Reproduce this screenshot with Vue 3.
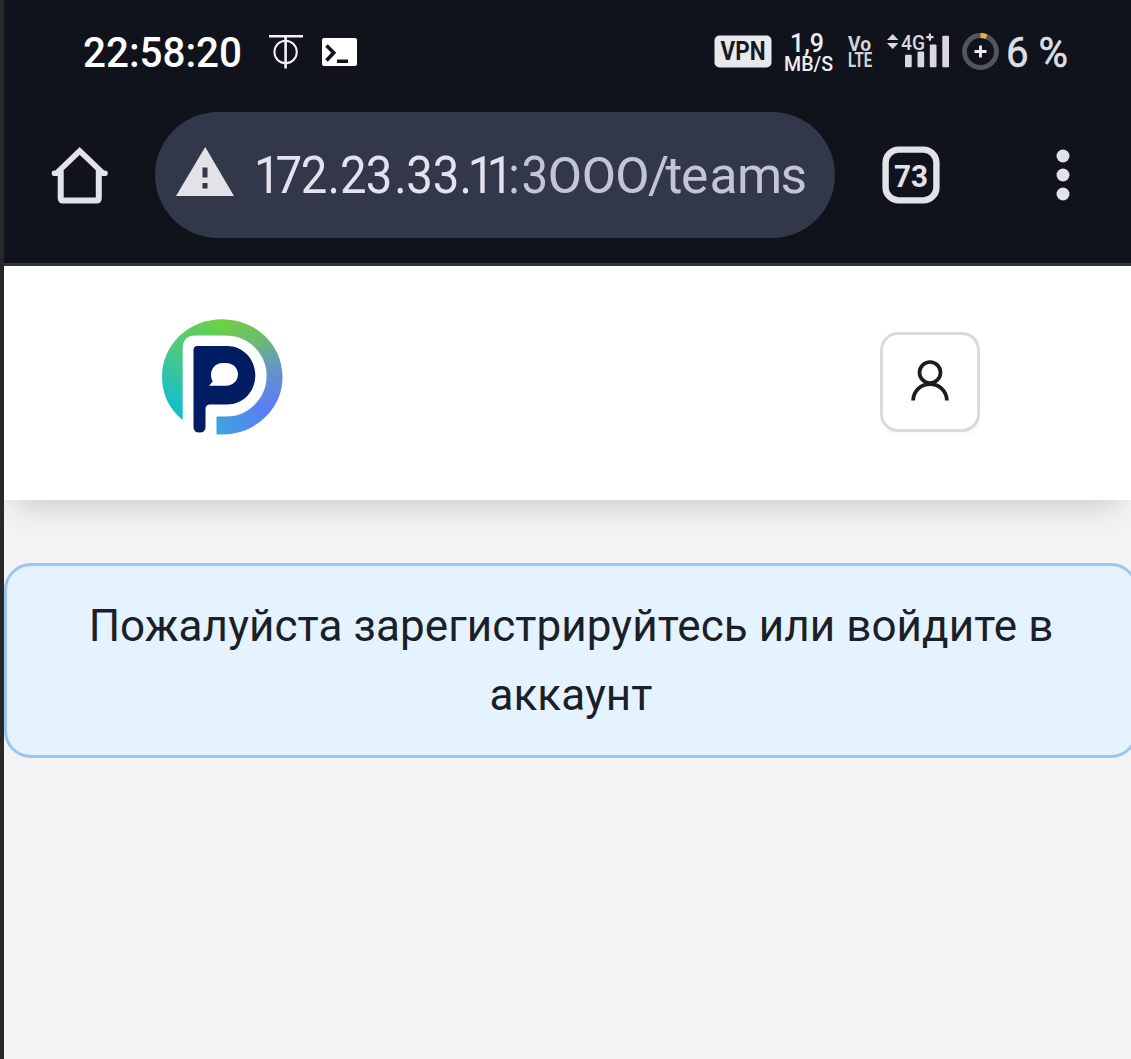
<script setup>
const signalBars = [
  { x: 18, y: 20.8, h: 12.4 },
  { x: 30.5, y: 17.5, h: 15.7 },
  { x: 42.8, y: 10.5, h: 22.7 },
  { x: 55.3, y: 1.8, h: 31.4 },
]
</script>

<template>
  <div class="screen">
    <header class="browser">
      <div class="status">
        <svg class="clock" width="162" height="44" viewBox="0 0 162 44">
          <text x="0" y="36.5" textLength="159" lengthAdjust="spacingAndGlyphs">22:58:20</text>
        </svg>
        <svg class="phi" width="36" height="36" viewBox="0 0 36 36" fill="none" stroke="#f3f3f6">
          <path d="M1 2.2H35" stroke-width="2.6" />
          <path d="M17.6 2V34.5" stroke-width="2.6" />
          <circle cx="17.6" cy="18" r="11.2" stroke-width="2" />
        </svg>
        <svg class="terminal" width="35" height="28" viewBox="0 0 35 28">
          <rect width="35" height="28" rx="2" fill="#fff" />
          <path d="M4.500 7.500L11.700 14.800L4.500 22.500M15 23.200H26" fill="none" stroke="#10131b" stroke-width="3.6" />
        </svg>
        <div class="grow"></div>
        <svg class="vpn" width="58" height="33" viewBox="0 0 58 33">
          <rect x=".5" y=".5" width="57" height="32" rx="5" fill="#e9e9eb" />
          <text x="6.5" y="25" textLength="45" lengthAdjust="spacingAndGlyphs">VPN</text>
        </svg>
        <svg class="speed" width="50" height="44" viewBox="0 0 50 44">
          <text class="speed-value" x="6" y="22.3" textLength="34" lengthAdjust="spacingAndGlyphs">1,9</text>
          <text class="speed-unit" x="0" y="40.5" textLength="49" lengthAdjust="spacingAndGlyphs">MB/S</text>
        </svg>
        <svg class="volte" width="26" height="36" viewBox="0 0 26 36">
          <text x="0" y="16.5" textLength="23" lengthAdjust="spacingAndGlyphs">Vo</text>
          <text x="0" y="32.8" textLength="24" lengthAdjust="spacingAndGlyphs">LTE</text>
        </svg>
        <svg class="signal" width="64" height="36" viewBox="0 0 64 36">
          <path d="M0 6L5.700 0L11.400 6ZM0 9L5.700 15L11.400 9Z" fill="#d8d9de" />
          <rect v-for="bar in signalBars" :key="bar.x" :x="bar.x" :y="bar.y" width="6.700" :height="bar.h" rx="1" fill="#d8d9de" />
          <text class="net" x="14" y="15.500" textLength="24" lengthAdjust="spacingAndGlyphs">4G</text>
          <path d="M39.300 3.200H46.500M42.900 -.4V6.800" stroke="#d8d9de" stroke-width="2.200" />
        </svg>
        <svg class="battery" width="37" height="37" viewBox="0 0 37 37" fill="none">
          <circle cx="18.500" cy="18.500" r="16" stroke="#53555c" stroke-width="4.800" />
          <path d="M18.500 2.500A16 16 0 0 1 24.500 3.700" stroke="#e8b23a" stroke-width="5" />
          <path d="M12.500 18.500H24.500M18.500 12.500V24.500" stroke="#ededf0" stroke-width="2.800" />
        </svg>
        <svg class="percent" width="64" height="44" viewBox="0 0 64 44">
          <text x="0" y="36.500" textLength="62" lengthAdjust="spacingAndGlyphs">6 %</text>
        </svg>
      </div>

      <div class="toolbar">
        <svg class="home" width="58" height="60" viewBox="0 0 58 60" fill="none" stroke="#e3e2e9" stroke-width="6">
          <path d="M9.700 25.500V53Q9.700 55.500 12.200 55.500H45.300Q47.800 55.500 47.800 53V25.500" />
          <path d="M3.500 28.300H5.500L28.700 6L52 28.300H54" stroke-width="5.600" stroke-linecap="round" stroke-linejoin="miter" />
        </svg>
        <div class="omnibox">
          <svg width="680" height="126" viewBox="0 0 680 126">
            <path d="M21 84L50.200 35L79 84Z" fill="#e3e2e9" />
            <path d="M50 55.500V65.500M50 71V76.500" stroke="#33374a" stroke-width="5" />
            <g transform="scale(.92 1)">
              <text class="url" y="81"><tspan class="host" x="107.500 131 158.500 187.500 201 229 260 273 302 331 340 360.500">172.23.33.11</tspan><tspan x="384 398.500">:3</tspan></text>
            </g>
            <g transform="scale(1.120 1)">
              <text class="url zeros" y="81" x="350.300 380.500 410.500">000</text>
            </g>
            <text class="url" y="81" x="493 510.500 526 554.500 582 625.500">/teams</text>
          </svg>
        </div>
        <svg class="tabs" width="58" height="58" viewBox="0 0 58 58">
          <rect x="3.600" y="3.600" width="50.800" height="50.800" rx="13" fill="none" stroke="#e3e2e9" stroke-width="6.400" />
          <text x="12" y="40.500" textLength="34" lengthAdjust="spacingAndGlyphs">73</text>
        </svg>
        <svg class="menu" width="14" height="52" viewBox="0 0 14 52" fill="#e3e2e9">
          <circle cx="7" cy="7" r="6.500" />
          <circle cx="7" cy="26" r="6.500" />
          <circle cx="7" cy="45" r="6.500" />
        </svg>
      </div>
    </header>

    <nav class="site-header">
      <svg class="logo" width="122" height="118" viewBox="0 0 122 118">
        <defs>
          <linearGradient id="ringLeft" gradientUnits="userSpaceOnUse" x1="66" y1="0" x2="14" y2="88">
            <stop offset="0" stop-color="#70d23c" />
            <stop offset=".5" stop-color="#4dc984" />
            <stop offset="1" stop-color="#15bfc8" />
          </linearGradient>
          <linearGradient id="ringRight" gradientUnits="userSpaceOnUse" x1="58" y1="0" x2="104" y2="92">
            <stop offset="0" stop-color="#70d23c" />
            <stop offset=".35" stop-color="#6bbd70" />
            <stop offset=".65" stop-color="#6796c4" />
            <stop offset="1" stop-color="#5a7df7" />
          </linearGradient>
          <linearGradient id="ringBottom" gradientUnits="userSpaceOnUse" x1="55" y1="110" x2="105" y2="88">
            <stop offset="0" stop-color="#3ca4dc" />
            <stop offset="1" stop-color="#5a7df7" />
          </linearGradient>
        </defs>
        <path d="M61.300 .3C27 .3 1 26 1 58C1 76 9 91 21.700 101V30Q21.700 16.500 34 16.500H61.300Z" fill="url(#ringLeft)" />
        <path d="M61 .3C95 .3 121.500 26 121.500 58C121.500 70 118 80.500 112 89L96.200 83A40.500 40.500 0 0 0 65 16.500H61Z" fill="url(#ringRight)" />
        <path d="M55.500 97.500H65A40.500 40.500 0 0 0 96.500 82.500L112.300 88.500C100 107 79 117 55.500 115.200Z" fill="url(#ringBottom)" />
        <path d="M32.500 31Q32.500 27 36.500 27H66C82 27 94.300 40 94.300 56C94.300 73 82 85.500 66 85.500H49Q44.500 85.500 44.500 90V108Q44.500 113.500 38.500 113.500Q32.500 113.500 32.500 108Z" fill="#001c62" />
        <path d="M61.500 44H65C72 44 77 49 77 55.300C77 61.700 72 66.700 65 66.700H48L51.700 62.500C50.600 60.500 50 58.500 50 56C50 49 55 44 61.500 44Z" fill="#fff" />
      </svg>
      <button class="profile" type="button" aria-label="Профиль">
        <svg width="40" height="44" viewBox="0 0 40 44" fill="none" stroke="#1b1b1c" stroke-width="3.700">
          <circle cx="20" cy="14.500" r="10.500" />
          <path d="M3.100 42.500C3.500 32.500 11 26.200 20 26.200S36.500 32.500 36.900 42.500" />
        </svg>
      </button>
    </nav>

    <main class="content">
      <div class="alert">Пожалуйста зарегистрируйтесь или войдите в<br />аккаунт</div>
    </main>
  </div>
</template>

<style>
body {
  margin: 0;
  overflow: hidden;
}
</style>

<style scoped>
.screen {
  box-sizing: border-box;
  display: flex;
  flex-direction: column;
  height: 1059px;
  border-left: 4px solid #282828;
  overflow: hidden;
  background: #f3f3f3;
  font-family: Roboto, sans-serif;
}
.screen svg {
  display: block;
  flex: none;
  overflow: visible;
}
.browser {
  box-sizing: border-box;
  flex: none;
  height: 266px;
  border-bottom: 3px solid #35353d;
  background: #10131b;
}
.status {
  display: flex;
  align-items: center;
  height: 103px;
  padding: 0 61px 0 79px;
}
.grow { flex: 1; }
.clock text { font-size: 42px; font-weight: 500; fill: #fff; }
.phi { margin-left: 23px; }
.terminal { margin-left: 18px; }
.vpn { margin-right: 12px; }
.vpn text { font-size: 25px; font-weight: 700; fill: #171920; }
.speed { margin-right: 14px; }
.speed text { fill: #eeeef1; font-weight: 500; }
.speed-value { font-size: 26px; }
.speed-unit { font-size: 20px; }
.volte { margin-right: 13px; }
.volte text { font-size: 20.500px; font-weight: 700; fill: #d2d3d8; }
.signal { margin-right: 11px; }
.net { font-size: 21px; font-weight: 500; fill: #d8d9de; stroke: #10131b; stroke-width: 2px; paint-order: stroke; }
.battery { margin-right: 7px; }
.percent text { font-size: 42px; fill: #dddde2; stroke: #dddde2; stroke-width: .6px; }

.toolbar {
  display: flex;
  align-items: center;
  height: 126px;
  margin-top: 9px;
  padding-left: 47px;
}
.omnibox {
  width: 680px;
  height: 126px;
  margin-left: 46px;
  border-radius: 63px;
  background: #33374a;
}
.url { font-size: 51.500px; fill: #c3c4d6; }
.host { fill: #e3e2ee; }
.zeros { font-family: Inter, sans-serif; font-size: 50px; font-weight: 400; }
.tabs { margin-left: 47px; }
.tabs text { font-size: 32px; font-weight: 700; fill: #e3e2e9; }
.menu { margin-left: 115.500px; }

.site-header {
  box-sizing: border-box;
  position: relative;
  flex: none;
  display: flex;
  justify-content: space-between;
  align-items: flex-start;
  height: 234px;
  padding: 53px 151px 0 157px;
  background: #fff;
  box-shadow: 0 16px 30px -13px rgba(0, 0, 0, .2);
}
.profile {
  box-sizing: border-box;
  display: flex;
  justify-content: center;
  align-items: center;
  width: 100px;
  height: 100px;
  margin-top: 13px;
  padding: 0;
  border: 3px solid #dadada;
  border-radius: 18px;
  background: #fff;
  box-shadow: 0 5px 2px rgba(0, 0, 0, .02);
}
.profile svg { margin-bottom: 4px; }
.content { padding-top: 63px; }
.alert {
  box-sizing: border-box;
  width: 1134px;
  height: 195px;
  padding: 26px 0 0;
  border: 3px solid #99c6f2;
  border-radius: 27px;
  background: #e4f3ff;
  color: #1b2026;
  font-size: 44px;
  letter-spacing: .08px;
  line-height: 69px;
  text-align: center;
  white-space: nowrap;
}
</style>
